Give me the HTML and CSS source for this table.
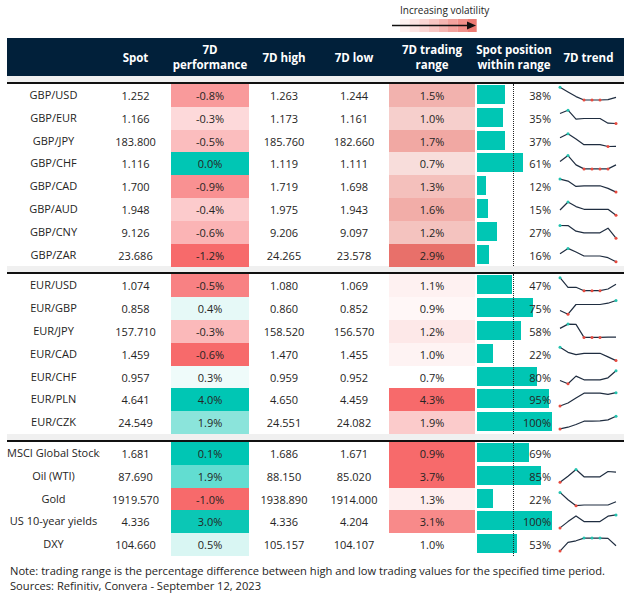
FILE: index.html
```html
<!DOCTYPE html>
<html lang="en">
<head>
<meta charset="utf-8">
<title>FX volatility table</title>
<link rel="stylesheet" href="styles.css">
</head>
<body>
<div class="page">
  <div class="legend">
    <div class="legend-box">
      <span class="legend-label">Increasing volatility</span>
      <svg class="legend-arrow" width="86" height="14" viewBox="0 0 86 14">
        <rect x="8" y="0" width="9.7" height="13" fill="#FEF1F0"/>
        <rect x="17.6" y="0" width="9.7" height="13" fill="#FCE3E2"/>
        <rect x="27.2" y="0" width="9.7" height="13" fill="#FAD5D3"/>
        <rect x="36.8" y="0" width="9.7" height="13" fill="#F8C6C3"/>
        <rect x="46.4" y="0" width="9.7" height="13" fill="#F6B5B1"/>
        <rect x="56" y="0" width="9.7" height="13" fill="#F3A29D"/>
        <rect x="65.6" y="0" width="9.7" height="13" fill="#F08F89"/>
        <rect x="75.2" y="0" width="9.5" height="13" fill="#EC7A73"/>
        <line x1="0" y1="6.5" x2="76" y2="6.5" stroke="#111" stroke-width="1.5"/>
        <polygon points="75,2.5 84,6.5 75,10.5" fill="#111"/>
      </svg>
    </div>
  </div>

  <div class="table">
    <div class="head">
      <div class="hcell"></div>
      <div class="hcell">Spot</div>
      <div class="hcell">7D<br>performance</div>
      <div class="hcell">7D high</div>
      <div class="hcell">7D low</div>
      <div class="hcell">7D trading<br>range</div>
      <div class="hcell">Spot position<br>within range</div>
      <div class="hcell">7D trend</div>
    </div>
    <div class="sep"></div>

    <div class="section">
      <div class="row">
        <div class="name">GBP/USD</div><div class="cell">1.252</div>
        <div class="cell" style="background:#F99A9B">-0.8%</div>
        <div class="cell">1.263</div><div class="cell">1.244</div>
        <div class="cell" style="background:#F2B2AE">1.5%</div>
        <div class="pos"><div class="bar" style="width:38%"></div><span class="pct">38%</span></div>
        <div class="trend"><svg class="spark" width="71" height="23" viewBox="0 0 71 23"><polyline points="7,3.3 15,8 23,12.6 31,16 39,16 47,16 55,15.6 63,13.3"/><circle class="hi" cx="7" cy="3.3" r="1.5"/><circle class="lo" cx="31" cy="16" r="1.5"/><circle class="lo" cx="39" cy="16" r="1.5"/><circle class="lo" cx="47" cy="16" r="1.5"/></svg></div>
      </div>
      <div class="row">
        <div class="name">GBP/EUR</div><div class="cell">1.166</div>
        <div class="cell" style="background:#FDD9DA">-0.3%</div>
        <div class="cell">1.173</div><div class="cell">1.161</div>
        <div class="cell" style="background:#F6CFCC">1.0%</div>
        <div class="pos"><div class="bar" style="width:35%"></div><span class="pct">35%</span></div>
        <div class="trend"><svg class="spark" width="71" height="23" viewBox="0 0 71 23"><polyline points="7,6.5 15,3.2 23,12.2 31,11.5 39,11.5 47,11.5 55,16.2 63,16.5"/><circle class="hi" cx="15" cy="3.2" r="1.5"/><circle class="lo" cx="63" cy="16.5" r="1.5"/></svg></div>
      </div>
      <div class="row">
        <div class="name">GBP/JPY</div><div class="cell">183.800</div>
        <div class="cell" style="background:#FBBDBE">-0.5%</div>
        <div class="cell">185.760</div><div class="cell">182.660</div>
        <div class="cell" style="background:#F1A8A3">1.7%</div>
        <div class="pos"><div class="bar" style="width:37%"></div><span class="pct">37%</span></div>
        <div class="trend"><svg class="spark" width="71" height="23" viewBox="0 0 71 23"><polyline points="7,7.7 15,3.7 23,9 31,14.7 39,14.7 47,14.7 55,16.5 63,16.3"/><circle class="hi" cx="15" cy="3.7" r="1.5"/><circle class="lo" cx="55" cy="16.5" r="1.5"/></svg></div>
      </div>
      <div class="row">
        <div class="name">GBP/CHF</div><div class="cell">1.116</div>
        <div class="cell" style="background:#00C6B4">0.0%</div>
        <div class="cell">1.119</div><div class="cell">1.111</div>
        <div class="cell" style="background:#F8DDDB">0.7%</div>
        <div class="pos"><div class="bar" style="width:61%"></div><span class="pct">61%</span></div>
        <div class="trend"><svg class="spark" width="71" height="23" viewBox="0 0 71 23"><polyline points="7,9.6 15,3.6 23,12.9 31,16.9 39,16.9 47,16.9 55,16.9 63,12.9"/><circle class="hi" cx="15" cy="3.6" r="1.5"/><circle class="lo" cx="31" cy="16.9" r="1.5"/><circle class="lo" cx="39" cy="16.9" r="1.5"/><circle class="lo" cx="47" cy="16.9" r="1.5"/><circle class="lo" cx="55" cy="16.9" r="1.5"/></svg></div>
      </div>
      <div class="row">
        <div class="name">GBP/CAD</div><div class="cell">1.700</div>
        <div class="cell" style="background:#F99192">-0.9%</div>
        <div class="cell">1.719</div><div class="cell">1.698</div>
        <div class="cell" style="background:#F4C0BC">1.3%</div>
        <div class="pos"><div class="bar" style="width:12%"></div><span class="pct">12%</span></div>
        <div class="trend"><svg class="spark" width="71" height="23" viewBox="0 0 71 23"><polyline points="7,4.1 15,6.1 23,11.4 31,10.8 39,10.8 47,10.8 55,13.4 63,17.1"/><circle class="hi" cx="7" cy="4.1" r="1.5"/><circle class="lo" cx="63" cy="17.1" r="1.5"/></svg></div>
      </div>
      <div class="row">
        <div class="name">GBP/AUD</div><div class="cell">1.948</div>
        <div class="cell" style="background:#FCCBCC">-0.4%</div>
        <div class="cell">1.975</div><div class="cell">1.943</div>
        <div class="cell" style="background:#F2ADA8">1.6%</div>
        <div class="pos"><div class="bar" style="width:15%"></div><span class="pct">15%</span></div>
        <div class="trend"><svg class="spark" width="71" height="23" viewBox="0 0 71 23"><polyline points="7,12 15,4 23,8.6 31,11.3 39,11.3 47,11.3 55,11.3 63,17.3"/><circle class="hi" cx="15" cy="4" r="1.5"/><circle class="lo" cx="63" cy="17.3" r="1.5"/></svg></div>
      </div>
      <div class="row">
        <div class="name">GBP/CNY</div><div class="cell">9.126</div>
        <div class="cell" style="background:#FBB4B5">-0.6%</div>
        <div class="cell">9.206</div><div class="cell">9.097</div>
        <div class="cell" style="background:#F4C3BF">1.2%</div>
        <div class="pos"><div class="bar" style="width:27%"></div><span class="pct">27%</span></div>
        <div class="trend"><svg class="spark" width="71" height="23" viewBox="0 0 71 23"><polyline points="7,4.5 15,4.6 23,10.2 31,11.8 39,11.8 47,11.8 55,7.2 63,17.2"/><circle class="hi" cx="7" cy="4.5" r="1.5"/><circle class="lo" cx="63" cy="17.2" r="1.5"/></svg></div>
      </div>
      <div class="row">
        <div class="name">GBP/ZAR</div><div class="cell">23.686</div>
        <div class="cell" style="background:#F76A6B">-1.2%</div>
        <div class="cell">24.265</div><div class="cell">23.578</div>
        <div class="cell" style="background:#E8706A">2.9%</div>
        <div class="pos"><div class="bar" style="width:16%"></div><span class="pct">16%</span></div>
        <div class="trend"><svg class="spark" width="71" height="23" viewBox="0 0 71 23"><polyline points="7,9.7 15,4.4 23,8 31,12 39,12 47,12 55,13.7 63,17.7"/><circle class="hi" cx="15" cy="4.4" r="1.5"/><circle class="lo" cx="63" cy="17.7" r="1.5"/></svg></div>
      </div>
      <div class="midline"></div>
    </div>
    <div class="sep"></div>

    <div class="section">
      <div class="row">
        <div class="name">EUR/USD</div><div class="cell">1.074</div>
        <div class="cell" style="background:#F88183">-0.5%</div>
        <div class="cell">1.080</div><div class="cell">1.069</div>
        <div class="cell" style="background:#FEF1F1">1.1%</div>
        <div class="pos"><div class="bar" style="width:47%"></div><span class="pct">47%</span></div>
        <div class="trend"><svg class="spark" width="71" height="23" viewBox="0 0 71 23"><polyline points="7,3.7 15,13.3 23,13.3 31,16.7 39,16.7 47,16.7 55,15 63,10.3"/><circle class="hi" cx="7" cy="3.7" r="1.5"/><circle class="lo" cx="31" cy="16.7" r="1.5"/><circle class="lo" cx="39" cy="16.7" r="1.5"/><circle class="lo" cx="47" cy="16.7" r="1.5"/></svg></div>
      </div>
      <div class="row">
        <div class="name">EUR/GBP</div><div class="cell">0.858</div>
        <div class="cell" style="background:#E6F9F7">0.4%</div>
        <div class="cell">0.860</div><div class="cell">0.852</div>
        <div class="cell" style="background:#FFF7F7">0.9%</div>
        <div class="pos"><div class="bar" style="width:75%"></div><span class="pct">75%</span></div>
        <div class="trend"><svg class="spark" width="71" height="23" viewBox="0 0 71 23"><polyline points="7,13.5 15,17.2 23,7.5 31,7.5 39,7.5 47,7.5 55,6.2 63,3.5"/><circle class="lo" cx="15" cy="17.2" r="1.5"/><circle class="hi" cx="63" cy="3.5" r="1.5"/></svg></div>
      </div>
      <div class="row">
        <div class="name">EUR/JPY</div><div class="cell">157.710</div>
        <div class="cell" style="background:#FBB9BA">-0.3%</div>
        <div class="cell">158.520</div><div class="cell">156.570</div>
        <div class="cell" style="background:#FDE8E8">1.2%</div>
        <div class="pos"><div class="bar" style="width:58%"></div><span class="pct">58%</span></div>
        <div class="trend"><svg class="spark" width="71" height="23" viewBox="0 0 71 23"><polyline points="7,8.4 15,4.1 23,4.4 31,17.4 39,17.4 47,17.4 55,17.1 63,17.1"/><circle class="hi" cx="15" cy="4.1" r="1.5"/><circle class="lo" cx="31" cy="17.4" r="1.5"/><circle class="lo" cx="39" cy="17.4" r="1.5"/><circle class="lo" cx="47" cy="17.4" r="1.5"/></svg></div>
      </div>
      <div class="row">
        <div class="name">EUR/CAD</div><div class="cell">1.459</div>
        <div class="cell" style="background:#F76A6B">-0.6%</div>
        <div class="cell">1.470</div><div class="cell">1.455</div>
        <div class="cell" style="background:#FEF3F3">1.0%</div>
        <div class="pos"><div class="bar" style="width:22%"></div><span class="pct">22%</span></div>
        <div class="trend"><svg class="spark" width="71" height="23" viewBox="0 0 71 23"><polyline points="7,4.3 15,9.3 23,11.6 31,10.3 39,10.3 47,10.3 55,13.9 63,17.6"/><circle class="hi" cx="7" cy="4.3" r="1.5"/><circle class="lo" cx="63" cy="17.6" r="1.5"/></svg></div>
      </div>
      <div class="row">
        <div class="name">EUR/CHF</div><div class="cell">0.957</div>
        <div class="cell" style="background:#EFFBFA">0.3%</div>
        <div class="cell">0.959</div><div class="cell">0.952</div>
        <div class="cell">0.7%</div>
        <div class="pos"><div class="bar" style="width:80%"></div><span class="pct">80%</span></div>
        <div class="trend"><svg class="spark" width="71" height="23" viewBox="0 0 71 23"><polyline points="7,14.5 15,17.8 23,10.1 31,13.8 39,13.8 47,13.8 55,11.8 63,4.8"/><circle class="lo" cx="15" cy="17.8" r="1.5"/><circle class="hi" cx="63" cy="4.8" r="1.5"/></svg></div>
      </div>
      <div class="row">
        <div class="name">EUR/PLN</div><div class="cell">4.641</div>
        <div class="cell" style="background:#00C6B4">4.0%</div>
        <div class="cell">4.650</div><div class="cell">4.459</div>
        <div class="cell" style="background:#F76A6B">4.3%</div>
        <div class="pos"><div class="bar" style="width:95%"></div><span class="pct">95%</span></div>
        <div class="trend"><svg class="spark" width="71" height="23" viewBox="0 0 71 23"><polyline points="7,18 15,15 23,10 31,5.2 39,5.2 47,5.2 55,6.3 63,4.7"/><circle class="lo" cx="7" cy="18" r="1.5"/><circle class="hi" cx="63" cy="4.7" r="1.5"/></svg></div>
      </div>
      <div class="row">
        <div class="name">EUR/CZK</div><div class="cell">24.549</div>
        <div class="cell" style="background:#8BE4DB">1.9%</div>
        <div class="cell">24.551</div><div class="cell">24.082</div>
        <div class="cell" style="background:#FBCBCB">1.9%</div>
        <div class="pos"><div class="bar" style="width:100%"></div><span class="pct">100%</span></div>
        <div class="trend"><svg class="spark" width="71" height="23" viewBox="0 0 71 23"><polyline points="7,17.9 15,16.2 23,13.5 31,10.2 39,10.2 47,9.9 55,8.9 63,5.2"/><circle class="lo" cx="7" cy="17.9" r="1.5"/><circle class="hi" cx="63" cy="5.2" r="1.5"/></svg></div>
      </div>
      <div class="midline"></div>
    </div>
    <div class="sep"></div>

    <div class="section">
      <div class="row">
        <div class="name">MSCI Global Stocks</div><div class="cell">1.681</div>
        <div class="cell" style="background:#00C6B4">0.1%</div>
        <div class="cell">1.686</div><div class="cell">1.671</div>
        <div class="cell" style="background:#F76A6B">0.9%</div>
        <div class="pos"><div class="bar" style="width:69%"></div><span class="pct">69%</span></div>
        <div class="trend"></div>
      </div>
      <div class="row">
        <div class="name">Oil (WTI)</div><div class="cell">87.690</div>
        <div class="cell" style="background:#62DDD1">1.9%</div>
        <div class="cell">88.150</div><div class="cell">85.020</div>
        <div class="cell" style="background:#F76A6B">3.7%</div>
        <div class="pos"><div class="bar" style="width:85%"></div><span class="pct">85%</span></div>
        <div class="trend"><svg class="spark" width="71" height="23" viewBox="0 0 71 23"><polyline points="7,17.2 15,11.2 23,4.5 31,11.8 39,11.8 47,11.8 55,6.5 63,7.2"/><circle class="lo" cx="7" cy="17.2" r="1.5"/><circle class="hi" cx="23" cy="4.5" r="1.5"/></svg></div>
      </div>
      <div class="row">
        <div class="name">Gold</div><div class="cell">1919.570</div>
        <div class="cell" style="background:#F76A6B">-1.0%</div>
        <div class="cell">1938.890</div><div class="cell">1914.000</div>
        <div class="cell" style="background:#FEEEEE">1.3%</div>
        <div class="pos"><div class="bar" style="width:22%"></div><span class="pct">22%</span></div>
        <div class="trend"><svg class="spark" width="71" height="23" viewBox="0 0 71 23"><polyline points="7,4.4 15,11.7 23,17.7 31,17 39,17 47,17 55,17 63,13.7"/><circle class="hi" cx="7" cy="4.4" r="1.5"/><circle class="lo" cx="23" cy="17.7" r="1.5"/></svg></div>
      </div>
      <div class="row">
        <div class="name">US 10-year yields</div><div class="cell">4.336</div>
        <div class="cell" style="background:#0BC7B5">3.0%</div>
        <div class="cell">4.336</div><div class="cell">4.204</div>
        <div class="cell" style="background:#F88A8A">3.1%</div>
        <div class="pos"><div class="bar" style="width:100%"></div><span class="pct">100%</span></div>
        <div class="trend"><svg class="spark" width="71" height="23" viewBox="0 0 71 23"><polyline points="7,17.9 15,11.6 23,5.9 31,11.6 39,11.6 47,11.6 55,6.2 63,4.9"/><circle class="lo" cx="7" cy="17.9" r="1.5"/><circle class="hi" cx="63" cy="4.9" r="1.5"/></svg></div>
      </div>
      <div class="row">
        <div class="name">DXY</div><div class="cell">104.660</div>
        <div class="cell" style="background:#D9F6F3">0.5%</div>
        <div class="cell">105.157</div><div class="cell">104.107</div>
        <div class="cell">1.0%</div>
        <div class="pos"><div class="bar" style="width:53%"></div><span class="pct">53%</span></div>
        <div class="trend"><svg class="spark" width="71" height="23" viewBox="0 0 71 23"><polyline points="7,18.1 15,9.4 23,7.8 31,5.1 39,5.1 47,5.1 55,5.4 63,12.8"/><circle class="lo" cx="7" cy="18.1" r="1.5"/><circle class="hi" cx="31" cy="5.1" r="1.5"/><circle class="hi" cx="39" cy="5.1" r="1.5"/><circle class="hi" cx="47" cy="5.1" r="1.5"/></svg></div>
      </div>
      <div class="midline"></div>
    </div>
  </div>

  <div class="note">
    <p>Note: trading range is the percentage difference between high and low trading values for the specified time period.</p>
    <p>Sources: Refinitiv, Convera - September 12, 2023</p>
  </div>
</div>
</body>
</html>
```

FILE: styles.css
```css
* {
  box-sizing: border-box;
}

html, body {
  margin: 0;
  padding: 0;
  background: #ffffff;
}

body {
  font-family: "Open Sans", "Noto Sans", "Liberation Sans", sans-serif;
  font-size: 11px;
  color: #252423;
}

.page {
  width: 632px;
  padding-left: 7px;
}

.legend {
  height: 38px;
  display: grid;
  grid-template-columns: 93px 71px 78px 70px 70px 86px 78px 71px;
}

.legend-box {
  grid-column: 6 / span 2;
  padding-left: 3px;
  padding-top: 3px;
  display: flex;
  flex-direction: column;
  align-items: flex-start;
}

.legend-label {
  font-size: 10px;
  line-height: 14px;
  margin-left: 8px;
}

.legend-arrow {
  display: block;
  margin-top: 2px;
}

.table {
  width: 617px;
}

.head {
  display: grid;
  grid-template-columns: 93px 71px 78px 70px 70px 86px 78px 71px;
  height: 38px;
  background: #01203A;
  color: #ffffff;
}

.hcell {
  display: flex;
  align-items: center;
  justify-content: center;
  text-align: center;
  font-weight: 700;
  font-size: 11.5px;
  line-height: 15px;
}

.sep {
  height: 8px;
  background: #F0F0F0;
  border-bottom: 2px solid #111111;
}

.section {
  position: relative;
}

.row {
  display: grid;
  grid-template-columns: 93px 71px 78px 70px 70px 86px 78px 71px;
  height: 22.8px;
}

.name {
  display: block;
  text-align: center;
  white-space: nowrap;
  overflow: hidden;
  line-height: 22.8px;
}

.cell {
  display: flex;
  align-items: center;
  justify-content: center;
  white-space: nowrap;
}

.pos {
  display: grid;
  grid-template-columns: 75.6px;
  padding-left: 1.7px;
}

.bar {
  grid-area: 1 / 1;
  justify-self: start;
  align-self: start;
  margin-top: 1px;
  height: 19px;
  background: #00C6B4;
}

.pct {
  grid-area: 1 / 1;
  justify-self: end;
  align-self: center;
  margin-right: 1.3px;
  position: relative;
}

.trend {
  display: block;
}

.spark {
  display: block;
}

.spark polyline {
  fill: none;
  stroke: #1F2D40;
  stroke-width: 1.2;
  stroke-linejoin: round;
}

.spark .hi {
  fill: #22C3AF;
}

.spark .lo {
  fill: #E84A3F;
}

.midline {
  position: absolute;
  left: 506px;
  top: 0;
  bottom: 0;
  border-left: 1px dotted #222222;
}

.note {
  padding-top: 7px;
  padding-left: 3px;
  font-size: 11.15px;
}

.note p {
  margin: 0;
  line-height: 15.3px;
}
```
